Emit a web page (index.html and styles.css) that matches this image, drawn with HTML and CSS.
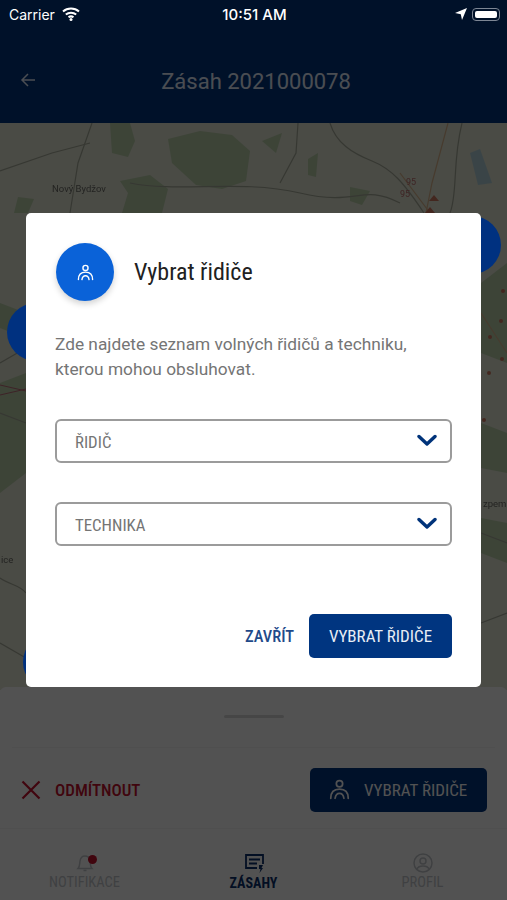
FILE: index.html
```html
<!DOCTYPE html>
<html lang="cs">
<head>
  <meta charset="UTF-8" />
  <meta name="viewport" content="width=device-width, initial-scale=1.0"/>
  <title>Zásah 2021000078</title>
  <link rel="stylesheet" href="styles.css">
</head>

<body>
  <svg class="defs" width="0" height="0">
    <symbol id="driver" viewBox="0 0 24 24">
      <circle cx="12" cy="5.500" r="3.600" fill="none" stroke="currentColor" stroke-width="2"/>
      <path d="M2 22C2 15 6 11.500 12 11.500S22 15 22 22" fill="none" stroke="currentColor" stroke-width="2" stroke-linecap="round"/>
      <path d="M7 22C7.500 18.500 9.500 16.500 12 16.500S16.500 18.500 17 22" fill="none" stroke="currentColor" stroke-width="2" stroke-linecap="round"/>
    </symbol>
    <symbol id="chevron" viewBox="0 0 20 13">
      <path d="M2 2.500L10 10L18 2.500" fill="none" stroke="currentColor" stroke-width="3.400" stroke-linecap="round" stroke-linejoin="round"/>
    </symbol>
  </svg>

  <div class="app">
    <div class="header">
      <svg class="back" viewBox="0 0 16 16" width="16" height="16">
        <path d="M15 8H2M8 2L2 8L8 14" fill="none" stroke="currentColor" stroke-width="1.500"/>
      </svg>
      <h1>Zásah 2021000078</h1>
    </div>

    <svg class="map" viewBox="0 0 507 567" preserveAspectRatio="none">
      <rect width="507" height="567" fill="#e5e8d6"/>
      <g fill="#bdd3ac">
        <path d="M110 0L130 0L135 18L128 34L112 30Z"/>
        <path d="M168 16L200 8L232 12L250 28L246 58L222 66L196 62L172 40Z"/>
        <path d="M262 18L282 10L276 30Z"/>
        <path d="M120 58L150 52L168 66L162 90H122L128 70Z"/>
        <path d="M18 74L34 76L28 90H14Z"/>
        <path d="M308 36L318 30L316 54L308 52Z"/>
        <path d="M350 64L370 68L362 82L350 78Z"/>
        <path d="M0 260L26 250V350L0 370Z"/>
        <path d="M0 180L26 190V215L0 205Z"/>
        <path d="M481 300L507 310V350L481 345Z"/>
        <path d="M481 160L507 140V240L481 230Z"/>
        <path d="M481 395L507 400V440L481 430Z"/>
      </g>
      <path d="M470 30L480 26L492 60L478 62Z" fill="#b4d4dc"/>
      <g fill="none" stroke="#a9ad9c" stroke-width="1.200">
        <path d="M92 0L78 40L70 90"/>
        <path d="M330 0C336 20 352 30 372 38S404 60 424 90"/>
        <path d="M298 0L296 30L280 60"/>
        <path d="M0 48L52 30L90 20"/>
        <path d="M130 60C180 70 240 56 300 70S360 60 400 80"/>
        <path d="M462 0C452 40 458 70 450 90"/>
        <path d="M0 455C10 462 20 462 26 470"/>
        <path d="M0 240L26 225"/>
        <path d="M0 290L26 300"/>
        <path d="M481 410L507 420"/>
        <path d="M0 520L26 535"/>
        <path d="M481 500L507 490"/>
      </g>
      <g fill="none" stroke="#dcb68e" stroke-width="1.200">
        <path d="M448 0L432 60L426 90"/>
        <path d="M400 50L430 90"/>
        <path d="M481 190L507 230"/>
      </g>
      <path d="M0 262L26 268M0 272L26 266" fill="none" stroke="#c06a78" stroke-width="1"/>
      <g fill="#cf7a62">
        <path d="M434 72L439 78H429Z"/>
        <path d="M430 84L435 90H425Z"/>
        <circle cx="503" cy="168" r="2"/>
        <circle cx="501" cy="198" r="2"/>
        <circle cx="490" cy="214" r="2"/>
        <circle cx="502" cy="236" r="2"/>
        <circle cx="489" cy="250" r="2"/>
        <circle cx="484" cy="297" r="2"/>
      </g>
      <g class="map-label">
        <text x="52" y="69">Nový Bydžov</text>
        <text x="483" y="384">zpem</text>
        <text x="1" y="440">ice</text>
      </g>
      <g class="map-road">
        <text x="406" y="62">95</text>
        <text x="400" y="74">95</text>
      </g>
    </svg>

    <div class="sheet">
      <div class="handle"></div>
      <div class="actions">
        <div class="decline">
          <svg viewBox="0 0 20 20" width="20" height="20">
            <path d="M1.500 1.500L18.500 18.500M18.500 1.500L1.500 18.500" fill="none" stroke="currentColor" stroke-width="2.200"/>
          </svg>
          <span class="cond">ODMÍTNOUT</span>
        </div>
        <div class="pick">
          <svg width="21" height="21"><use href="#driver"/></svg>
          <span class="cond">VYBRAT ŘIDIČE</span>
        </div>
      </div>
      <div class="tabs">
        <div class="tab">
          <span class="tab-icon">
            <svg viewBox="0 0 20 20" width="20" height="20">
              <path d="M3 15.500C5 13.500 4.500 11 5 8C5.500 5 7.500 3 10 3S14.500 5 15 8C15.500 11 15 13.500 17 15.500ZM8.500 17.500H11.500" fill="none" stroke="currentColor" stroke-width="1.500"/>
            </svg>
            <i class="dot"></i>
          </span>
          <span class="cond">NOTIFIKACE</span>
        </div>
        <div class="tab active">
          <span class="tab-icon">
            <svg viewBox="0 0 20 20" width="20" height="20">
              <path d="M13 15H2V2H19V11M5 6.500H16M5 10.500H13" fill="none" stroke="currentColor" stroke-width="1.800"/>
              <path d="M15 12H19L17.500 15H19L15.500 20L16.500 16H15Z" fill="currentColor"/>
            </svg>
          </span>
          <span class="cond">ZÁSAHY</span>
        </div>
        <div class="tab">
          <span class="tab-icon">
            <svg viewBox="0 0 20 20" width="20" height="20">
              <circle cx="10" cy="10" r="9" fill="none" stroke="currentColor" stroke-width="1.500"/>
              <circle cx="10" cy="8" r="3" fill="none" stroke="currentColor" stroke-width="1.500"/>
              <path d="M4 16C5 13.500 7.500 13 10 13S15 13.500 16 16" fill="none" stroke="currentColor" stroke-width="1.500"/>
            </svg>
          </span>
          <span class="cond">PROFIL</span>
        </div>
      </div>
    </div>

    <!-- dialog layer -->
    <div class="scrim">
      <i class="pin pin-right"></i>
      <i class="pin pin-left"></i>
      <i class="pin pin-bottom"></i>

      <div class="modal">
        <div class="modal-head">
          <div class="modal-icon">
            <svg width="17" height="17"><use href="#driver"/></svg>
          </div>
          <h2 class="cond">Vybrat řidiče</h2>
        </div>
        <p>Zde najdete seznam volných řidičů a techniku, kterou mohou obsluhovat.</p>
        <div class="select">
          <span class="cond">ŘIDIČ</span>
          <svg width="20" height="13"><use href="#chevron"/></svg>
        </div>
        <div class="select">
          <span class="cond">TECHNIKA</span>
          <svg width="20" height="13"><use href="#chevron"/></svg>
        </div>
        <div class="modal-buttons">
          <span class="close cond">ZAVŘÍT</span>
          <span class="confirm cond">VYBRAT ŘIDIČE</span>
        </div>
      </div>
    </div>

    <div class="statusbar">
      <div class="status-left">
        <span>Carrier</span>
        <svg viewBox="0 0 18 14" width="18" height="14">
          <path d="M1 4.500C5.500 .5 12.500 .5 17 4.500M3.800 7.500C6.800 5 11.200 5 14.200 7.500M6.500 10.300C8 9.200 10 9.200 11.500 10.300" fill="none" stroke="currentColor" stroke-width="2"/>
          <circle cx="9" cy="12.500" r="1.500" fill="currentColor"/>
        </svg>
      </div>
      <span class="time">10:51 AM</span>
      <div class="status-right">
        <svg viewBox="0 0 12 12" width="12" height="12">
          <path d="M12 0L7 12L5.800 6.200L0 5Z" fill="currentColor"/>
        </svg>
        <span class="battery"><i></i></span>
      </div>
    </div>
  </div>
</body>
</html>
```

FILE: styles.css
```css
* {
  box-sizing: border-box;
}

body {
  margin: 0;
  font-family: Roboto, "Liberation Sans", sans-serif;
}

.defs {
  position: absolute;
}

.cond {
  font-stretch: 75%;
}

.app {
  position: relative;
  width: 507px;
  height: 900px;
  display: flex;
  flex-direction: column;
  overflow: hidden;
  background: #fff;
}

/* status bar sits above the dim layer */
.statusbar {
  position: absolute;
  top: 0;
  left: 0;
  right: 0;
  height: 28px;
  padding: 0 7px 0 9px;
  display: flex;
  align-items: center;
  justify-content: space-between;
  color: #fff;
  font-family: Inter, sans-serif;
  font-size: 14px;
}

.status-left {
  display: flex;
  align-items: center;
  gap: 7px;
  width: 130px;
}

.status-right {
  display: flex;
  align-items: center;
  justify-content: flex-end;
  gap: 5px;
  width: 130px;
}

.time {
  font-size: 15px;
  font-weight: 500;
}

.battery {
  width: 28px;
  height: 13px;
  padding: 2px;
  border: 1px solid #7d8694;
  border-radius: 4px;
  display: flex;
}

.battery i {
  flex: 1;
  background: #fff;
  border-radius: 2px;
}

.header {
  height: 123px;
  flex: none;
  padding: 39px 0 0 5px;
  background: #003580;
  color: #e6f0ff;
  display: flex;
  align-items: center;
  justify-content: center;
  position: relative;
}

.header h1 {
  margin: 0;
  font-size: 22px;
  font-weight: 400;
}

.back {
  position: absolute;
  left: 20px;
  top: 72px;
}

.map {
  display: block;
  height: 567px;
  width: 100%;
  flex: none;
  filter: blur(.7px);
}

.map-label {
  font-family: Roboto, sans-serif;
  font-size: 9.500px;
  fill: #6e6e68;
}

.map-road {
  font-family: Roboto, sans-serif;
  font-size: 9px;
  fill: #c07070;
}

.sheet {
  flex: 1;
  position: relative;
  margin-top: -3px;
  border-radius: 6px 6px 0 0;
  background: #fff;
  display: flex;
  flex-direction: column;
}

.handle {
  width: 60px;
  height: 3px;
  margin: 28px auto 29px;
  border-radius: 2px;
  background: #dadada;
}

.actions {
  height: 81px;
  margin: 0 12px;
  padding-top: 3px;
  border-top: 1px solid #f4f4f4;
  display: flex;
  align-items: center;
  justify-content: space-between;
}

.decline {
  display: flex;
  align-items: center;
  gap: 14px;
  margin-left: 9px;
  color: #c8102e;
  font-size: 17px;
  font-weight: 500;
}

.pick {
  width: 177px;
  height: 44px;
  margin-right: 8px;
  border-radius: 5px;
  background: #003580;
  color: #fff;
  font-size: 17px;
  display: flex;
  align-items: center;
  gap: 14px;
  padding-left: 19px;
}

.tabs {
  flex: 1;
  border-top: 1px solid #f4f4f4;
  display: grid;
  grid-template-columns: repeat(3, 1fr);
  padding-top: 24px;
}

.tab {
  display: flex;
  flex-direction: column;
  align-items: center;
  font-size: 14.500px;
  line-height: 16px;
  color: #c4c8cc;
}

.tab.active {
  color: #0a2f6c;
  font-size: 14px;
  font-weight: 700;
}

.tab-icon {
  position: relative;
  height: 22px;
}

.dot {
  position: absolute;
  top: 2px;
  right: -2px;
  width: 9px;
  height: 9px;
  border-radius: 50%;
  background: #c8102e;
}

.scrim {
  position: absolute;
  inset: 0;
  background: rgba(0, 0, 0, 0.68);
  display: flex;
  align-items: center;
  justify-content: center;
}

.pin {
  position: absolute;
  width: 58px;
  height: 58px;
  border-radius: 50%;
  background: #003180;
}

.pin-right {
  left: 443px;
  top: 216px;
}

.pin-left {
  left: 7px;
  top: 303px;
}

.pin-bottom {
  left: 23px;
  top: 633px;
  clip-path: inset(0 0 5px 0);
}

.modal {
  position: relative;
  width: 455px;
  padding: 30px 29px 29px;
  background: #fff;
  border-radius: 5px;
}

.modal-head {
  display: flex;
  align-items: center;
  gap: 20px;
}

.modal-icon {
  width: 58px;
  height: 58px;
  margin-left: 1px;
  border-radius: 50%;
  background: #0a62d8;
  color: #fff;
  box-shadow: 0 3px 6px rgba(0, 0, 0, 0.18);
  display: flex;
  align-items: center;
  justify-content: center;
}

.modal h2 {
  margin: 0;
  font-size: 24px;
  font-weight: 400;
  color: #212121;
}

.modal p {
  margin: 31px 0 37px;
  font-size: 17.300px;
  line-height: 25px;
  color: #757575;
}

.select {
  height: 44px;
  margin-bottom: 39px;
  padding: 1px 13px 0 18px;
  border: 2px solid #9b9b9b;
  border-radius: 6px;
  display: flex;
  align-items: center;
  justify-content: space-between;
  font-size: 16.800px;
  color: #757575;
}

.select svg {
  color: #00337a;
  margin-top: -3px;
}

.modal-buttons {
  margin-top: 68px;
  display: flex;
  align-items: center;
  justify-content: flex-end;
  gap: 15px;
  font-size: 17px;
}

.close {
  font-size: 16.500px;
  font-weight: 500;
  color: #1f4a8a;
}

.confirm {
  width: 143px;
  height: 44px;
  border-radius: 5px;
  background: #003580;
  color: #e8edf5;
  display: flex;
  align-items: center;
  justify-content: center;
}
```
